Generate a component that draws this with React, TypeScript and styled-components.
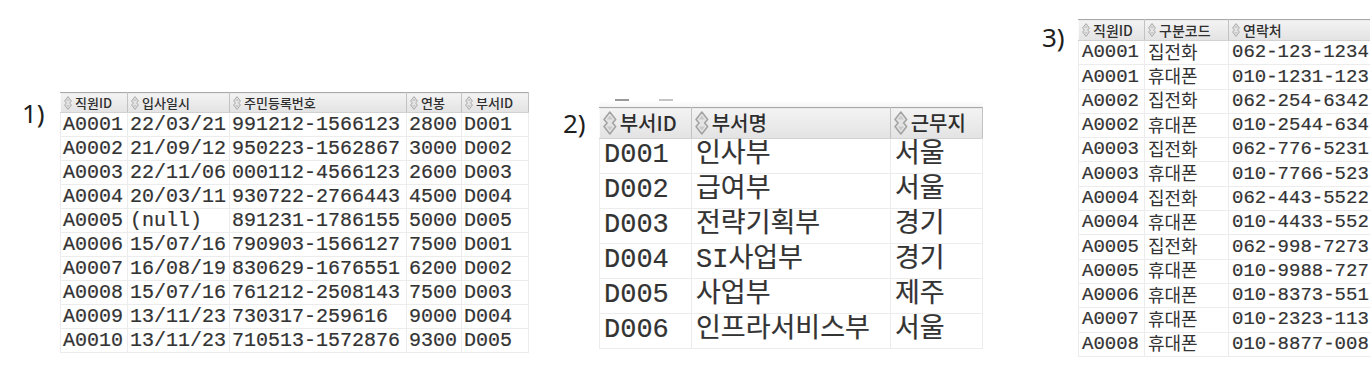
import React from "react";
import styled, { createGlobalStyle } from "styled-components";

const MONO = `"Liberation Mono", "Noto Sans CJK KR", monospace`;
const KR = `"Noto Sans CJK KR", "Noto Sans", sans-serif`;

type Look = {
  head: number;
  row: number;
  headFont: number;
  font: number;
  icon: number;
  pad: number;
};

const GlobalStyle = createGlobalStyle`
  html, body {
    margin: 0;
    padding: 0;
    background: #fff;
  }
`;

const Stage = styled.div`
  display: flex;
  align-items: flex-start;
  width: 1370px;
  height: 375px;
  overflow: hidden;
  background: #fff;
`;

const Figure = styled.section<{ $left: number; $top: number }>`
  display: flex;
  align-items: flex-start;
  flex: none;
  margin-left: ${(p) => p.$left}px;
  padding-top: ${(p) => p.$top}px;
`;

const Label = styled.div<{ $w: number; $dy: number }>`
  width: ${(p) => p.$w}px;
  margin-top: ${(p) => p.$dy}px;
  font-family: "Noto Sans", sans-serif;
  font-size: 26px;
  line-height: 30px;
  color: #1e1e1e;
`;

const Column = styled.div`
  display: flex;
  flex-direction: column;
`;

const Peek = styled.div`
  height: 15px;
  display: flex;
  align-items: center;
  gap: 30px;
  padding-left: 16px;
  background: linear-gradient(#fff 0, #fff 60%, #f4f4f4 100%);
`;

const Dash = styled.span<{ $light?: boolean }>`
  width: 14px;
  height: 2px;
  background: ${(p) => (p.$light ? "#c4c4c4" : "#9a9a9a")};
`;

const Grid = styled.table<{ $w: number; $open?: boolean }>`
  width: ${(p) => p.$w}px;
  border-collapse: collapse;
  table-layout: fixed;

  ${(p) =>
    p.$open &&
    `
    td:last-child, th:last-child {
      border-right: none;
    }
  `}
`;

const HeadCell = styled.th<{ $look: Look }>`
  height: ${(p) => p.$look.head}px;
  box-sizing: border-box;
  padding: 0 0 0 3px;
  text-align: left;
  background: linear-gradient(#f3f3f3, #e3e3e3);
  border-top: 1px solid #a8a8a8;
  border-bottom: 1px solid #d2d2d2;
  border-right: 1px solid #c2c2c2;
  border-left: 1px solid #fafafa;
  font-family: ${KR};
  font-size: ${(p) => p.$look.headFont}px;
  font-weight: 500;
  color: #2e2e2e;
  white-space: nowrap;
`;

const HeadInner = styled.span`
  display: flex;
  align-items: center;
  gap: 3px;
  line-height: 1.2;
`;

const Cell = styled.td<{ $look: Look; $kr?: number }>`
  height: ${(p) => p.$look.row}px;
  box-sizing: border-box;
  padding: 0 0 ${(p) => (p.$kr ? 2 : 0)}px ${(p) => p.$look.pad}px;
  border: 1px solid #ececec;
  font-family: ${(p) => (p.$kr ? KR : MONO)};
  font-size: ${(p) => p.$kr ?? p.$look.font}px;
  line-height: 1.1;
  color: #333;
  -webkit-text-stroke: ${(p) => (p.$kr ? "0" : "0.2px #333")};
  white-space: nowrap;
  vertical-align: middle;
`;

const SortIcon = ({ h }: { h: number }) => (
  <svg width={(h * 8) / 14} height={h} viewBox="0 0 8 14" style={{ flex: "none" }}>
    <path
      d="M4 0.6 L7.4 5 L5.6 7 L7.4 9 L4 13.4 L0.6 9 L2.4 7 L0.6 5 Z"
      fill="#e4e4e4"
      stroke="#a2a2a2"
      strokeWidth="0.9"
      strokeLinejoin="round"
    />
    <path d="M4 2.6 L5.8 5 L2.2 5 Z M4 11.4 L5.8 9 L2.2 9 Z" fill="#c9c9c9" />
  </svg>
);

type TableProps = {
  look: Look;
  cols: number[];
  heads: string[];
  rows: string[][];
  krCols?: Record<number, number>;
  open?: boolean;
};

const DataTable = ({ look, cols, heads, rows, krCols = {}, open }: TableProps) => (
  <Grid $w={cols.reduce((a, b) => a + b, 0)} $open={open}>
    <colgroup>
      {cols.map((w, i) => (
        <col key={i} style={{ width: w }} />
      ))}
    </colgroup>
    <thead>
      <tr>
        {heads.map((h) => (
          <HeadCell key={h} $look={look}>
            <HeadInner>
              <SortIcon h={look.icon} />
              {h}
            </HeadInner>
          </HeadCell>
        ))}
      </tr>
    </thead>
    <tbody>
      {rows.map((r, i) => (
        <tr key={i}>
          {r.map((v, j) => (
            <Cell key={j} $look={look} $kr={krCols[j]}>
              {v}
            </Cell>
          ))}
        </tr>
      ))}
    </tbody>
  </Grid>
);

const employees = [
  ["A0001", "22/03/21", "991212-1566123", "2800", "D001"],
  ["A0002", "21/09/12", "950223-1562867", "3000", "D002"],
  ["A0003", "22/11/06", "000112-4566123", "2600", "D003"],
  ["A0004", "20/03/11", "930722-2766443", "4500", "D004"],
  ["A0005", "(null)", "891231-1786155", "5000", "D005"],
  ["A0006", "15/07/16", "790903-1566127", "7500", "D001"],
  ["A0007", "16/08/19", "830629-1676551", "6200", "D002"],
  ["A0008", "15/07/16", "761212-2508143", "7500", "D003"],
  ["A0009", "13/11/23", "730317-259616", "9000", "D004"],
  ["A0010", "13/11/23", "710513-1572876", "9300", "D005"],
];

const depts = [
  ["D001", "인사부", "서울"],
  ["D002", "급여부", "서울"],
  ["D003", "전략기획부", "경기"],
  ["D004", "SI사업부", "경기"],
  ["D005", "사업부", "제주"],
  ["D006", "인프라서비스부", "서울"],
];

const contacts = [
  ["A0001", "집전화", "062-123-1234"],
  ["A0001", "휴대폰", "010-1231-123"],
  ["A0002", "집전화", "062-254-6342"],
  ["A0002", "휴대폰", "010-2544-634"],
  ["A0003", "집전화", "062-776-5231"],
  ["A0003", "휴대폰", "010-7766-523"],
  ["A0004", "집전화", "062-443-5522"],
  ["A0004", "휴대폰", "010-4433-552"],
  ["A0005", "집전화", "062-998-7273"],
  ["A0005", "휴대폰", "010-9988-727"],
  ["A0006", "휴대폰", "010-8373-551"],
  ["A0007", "휴대폰", "010-2323-113"],
  ["A0008", "휴대폰", "010-8877-008"],
];

const small: Look = { head: 20, row: 24, headFont: 13, font: 20, icon: 14, pad: 2 };
const big: Look = { head: 31, row: 35, headFont: 20, font: 27, icon: 24, pad: 4 };
const side: Look = { head: 21, row: 24.3, headFont: 14, font: 19, icon: 14, pad: 3 };

export default function App() {
  return (
    <>
      <GlobalStyle />
      <Stage>
        <Figure $left={22} $top={92}>
          <Label $w={38} $dy={6}>1)</Label>
          <DataTable
            look={small}
            cols={[67, 102, 177, 55, 67]}
            heads={["직원ID", "입사일시", "주민등록번호", "연봉", "부서ID"]}
            rows={employees}
          />
        </Figure>

        <Figure $left={34} $top={92}>
          <Label $w={36} $dy={16}>2)</Label>
          <Column>
            <Peek>
              <Dash />
              <Dash $light />
            </Peek>
            <DataTable
              look={big}
              cols={[92, 199, 92]}
              heads={["부서ID", "부서명", "근무지"]}
              rows={depts}
            />
          </Column>
        </Figure>

        <Figure $left={59} $top={19}>
          <Label $w={36} $dy={3}>3)</Label>
          <DataTable
            look={side}
            cols={[66, 84, 144]}
            heads={["직원ID", "구분코드", "연락처"]}
            rows={contacts}
            krCols={{ 1: 18 }}
            open
          />
        </Figure>
      </Stage>
    </>
  );
}
